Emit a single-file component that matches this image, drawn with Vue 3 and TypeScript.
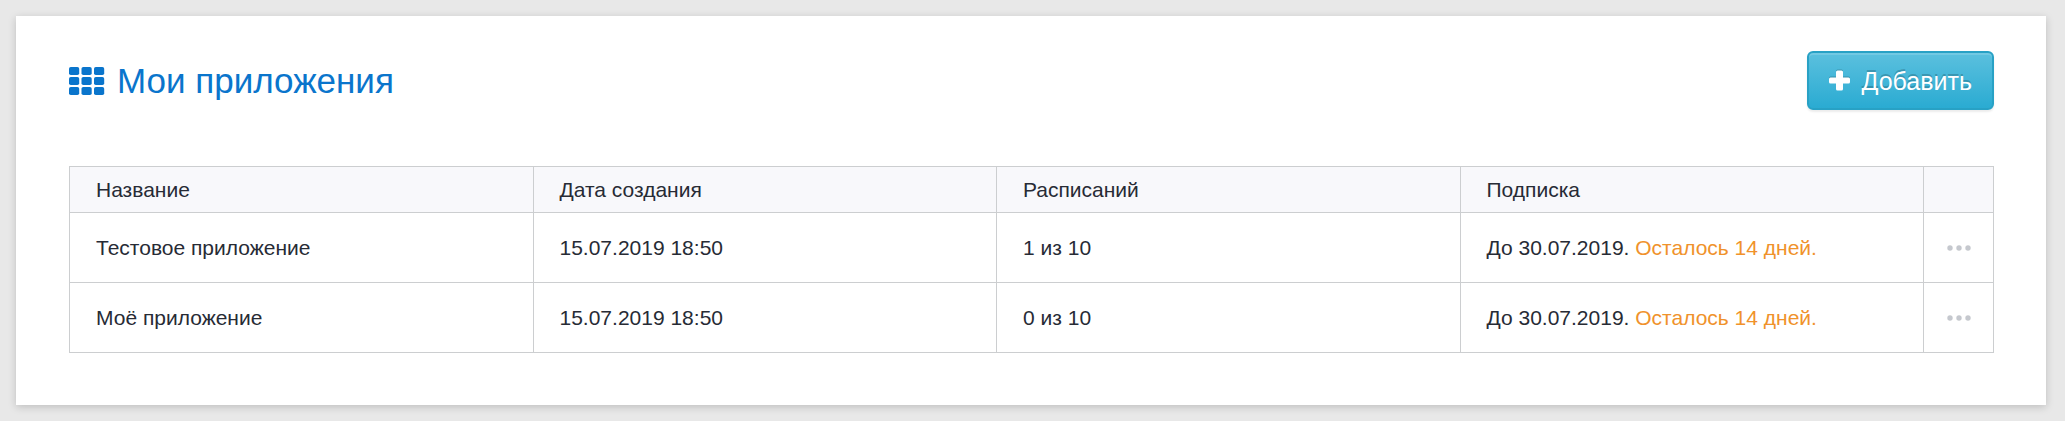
<script setup lang="ts">
interface AppRow {
  id: number
  name: string
  created: string
  schedules: string
  until: string
  left: string
}

const rows: AppRow[] = [
  { id: 1, name: 'Тестовое приложение', created: '15.07.2019 18:50', schedules: '1 из 10', until: 'До 30.07.2019.', left: 'Осталось 14 дней.' },
  { id: 2, name: 'Моё приложение', created: '15.07.2019 18:50', schedules: '0 из 10', until: 'До 30.07.2019.', left: 'Осталось 14 дней.' },
]

const cells = [0, 1, 2]
</script>

<template>
  <main class="card">
    <header class="head">
      <h1 class="title">
        <svg class="grid-icon" viewBox="0 0 36 28" aria-hidden="true">
          <template v-for="r in cells" :key="r">
            <rect v-for="c in cells" :key="c" :x="c * 12.5" :y="r * 10" width="10.2" height="8" rx="1.8" />
          </template>
        </svg>
        <span>Мои приложения</span>
      </h1>
      <button class="add" type="button">
        <svg class="plus" viewBox="0 0 21 21" aria-hidden="true">
          <path d="M8.5 0.5h4q1.5 0 1.5 1.500v5.500h5.500q1.500 0 1.500 1.500v3q0 1.500-1.500 1.500H14v5.500q0 1.500-1.500 1.500h-4q-1.500 0-1.500-1.500V13.500H1.500Q0 13.500 0 12V9q0-1.500 1.500-1.500H7V2q0-1.500 1.500-1.500z" />
        </svg>
        <span>Добавить</span>
      </button>
    </header>

    <table class="apps">
      <colgroup>
        <col /><col /><col /><col /><col class="col-actions" />
      </colgroup>
      <thead>
        <tr>
          <th scope="col">Название</th>
          <th scope="col">Дата создания</th>
          <th scope="col">Расписаний</th>
          <th scope="col">Подписка</th>
          <td></td>
        </tr>
      </thead>
      <tbody>
        <tr v-for="row in rows" :key="row.id">
          <td>{{ row.name }}</td>
          <td>{{ row.created }}</td>
          <td>{{ row.schedules }}</td>
          <td>{{ row.until }} <span class="left">{{ row.left }}</span></td>
          <td class="actions">
            <button class="more" type="button" aria-label="Действия">
              <svg viewBox="0 0 24 6" aria-hidden="true">
                <circle cx="3" cy="3" r="2.7" />
                <circle cx="12" cy="3" r="2.7" />
                <circle cx="21" cy="3" r="2.7" />
              </svg>
            </button>
          </td>
        </tr>
      </tbody>
    </table>
  </main>
</template>

<style>
body {
  margin: 0;
  background: #e8e8e8;
}
</style>

<style scoped>
.card {
  box-sizing: border-box;
  margin: 16px 19px 16px 16px;
  padding: 35px 52px 52px 53px;
  background: #fff;
  box-shadow: 0 2px 8px rgba(0, 0, 0, 0.18);
  font-family: "Liberation Sans", Arial, sans-serif;
  font-size: 21px;
  color: #272b35;
}

.head {
  display: flex;
  align-items: center;
  justify-content: space-between;
  margin-bottom: 56px;
}

.title {
  display: flex;
  align-items: center;
  gap: 12px;
  margin: 0;
  font-size: 35px;
  line-height: 40px;
  font-weight: 400;
  color: #0a75cc;
}

.grid-icon {
  width: 36px;
  height: 28px;
  fill: currentColor;
}

.add {
  display: flex;
  align-items: center;
  gap: 12px;
  height: 59px;
  padding: 0 20px;
  border: 2px solid #28a1c5;
  border-radius: 6px;
  background: linear-gradient(#5bc0de, #2aabd2);
  box-shadow: inset 0 2px 0 rgba(255, 255, 255, 0.15), 0 2px 2px rgba(0, 0, 0, 0.075);
  font: inherit;
  font-size: 25px;
  line-height: 32px;
  color: #fff;
  text-shadow: 0 -2px 0 rgba(0, 0, 0, 0.2);
  cursor: pointer;
}

.plus {
  width: 21px;
  height: 21px;
  fill: currentColor;
  filter: drop-shadow(0 -1px 0 rgba(0, 0, 0, 0.2));
}

.apps {
  width: 100%;
  table-layout: fixed;
  border-collapse: collapse;
}

.col-actions {
  width: 70px;
}

.apps th,
.apps td {
  height: 69px;
  padding: 0 26px;
  border: 1px solid #ccced0;
  font-weight: 400;
  line-height: 30px;
  text-align: left;
  vertical-align: middle;
}

.apps thead th,
.apps thead td {
  height: 45px;
  background: #f8f8fb;
}

.left {
  color: #f0922b;
}

.apps .actions {
  padding: 0;
  text-align: center;
}

.more {
  display: flex;
  align-items: center;
  justify-content: center;
  width: 100%;
  height: 30px;
  padding: 0;
  border: 0;
  background: none;
  cursor: pointer;
}

.more svg {
  width: 24px;
  height: 6px;
  fill: #c5c8ce;
}
</style>
